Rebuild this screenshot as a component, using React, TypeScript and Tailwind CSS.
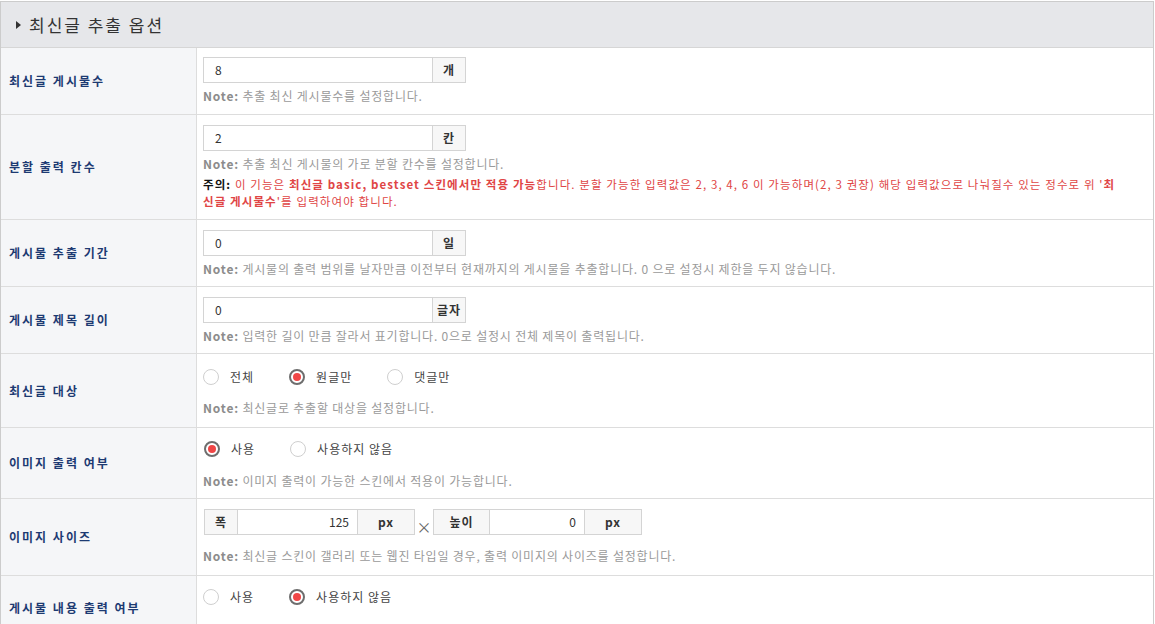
import type { ReactNode } from "react";

const font = {
  fontFamily: "'Noto Sans CJK KR', 'Noto Sans', sans-serif",
};

function Row({ label, children, className = "" }: { label: string; children: ReactNode; className?: string }) {
  return (
    <div className="flex border-b border-[#dddddd]">
      <div className="w-[196px] shrink-0 flex items-center pl-[8px] bg-[#f5f6f8] border-r border-[#dddddd] text-[12px] font-bold tracking-[2px] text-[#1d3a72]">
        {label}
      </div>
      <div className={`flex-1 pl-[6px] pr-[10px] ${className}`}>{children}</div>
    </div>
  );
}

function Note({ children, className = "mt-[4px]" }: { children: ReactNode; className?: string }) {
  return (
    <p className={`h-[18px] leading-[18px] text-[12px] tracking-[0.8px] text-[#9a9a9a] ${className}`}>
      <b className="font-bold text-[#8c8c8c]">Note:</b> {children}
    </p>
  );
}

function UnitInput({ value, unit }: { value: string; unit: string }) {
  return (
    <div className="flex h-[26px] w-[263px]">
      <div className="w-[230px] border border-[#d4d4d4] bg-white pl-[11px] text-[12px] leading-[24px] text-[#333]">
        {value}
      </div>
      <div className="w-[33px] border border-l-0 border-[#d4d4d4] bg-[#f7f7f7] text-center text-[12px] font-bold tracking-[1px] leading-[24px] text-[#333]">
        {unit}
      </div>
    </div>
  );
}

function Radio({ label, checked = false }: { label: string; checked?: boolean }) {
  return (
    <label className="flex items-center gap-[11px] mr-[35px]">
      {checked ? (
        <span className="flex h-[16px] w-[16px] items-center justify-center rounded-full border-2 border-[#6e6e6e] bg-white">
          <span className="h-[8px] w-[8px] rounded-full bg-[#f04646]" />
        </span>
      ) : (
        <span className="h-[16px] w-[16px] rounded-full border border-[#cfcfcf] bg-white" />
      )}
      <span className="text-[12px] tracking-[1px] text-[#444]">{label}</span>
    </label>
  );
}

function Box({ children, w, bold = true, right = false }: { children: ReactNode; w: string; bold?: boolean; right?: boolean }) {
  return (
    <div
      className={`${w} h-[26px] border border-[#d4d4d4] -ml-px first:ml-0 text-[12px] leading-[24px] text-[#333] ${
        bold ? "bg-[#f7f7f7] font-bold text-center tracking-[1px]" : "bg-white"
      } ${right ? "text-right pr-[8px]" : ""}`}
    >
      {children}
    </div>
  );
}

export default function App() {
  return (
    <div className="bg-white h-[624px] overflow-hidden" style={font}>
      <div className="mt-px w-[1154px] border-t border-l border-r border-[#cccccc]">
        <div className="h-[46px] flex items-center gap-[8px] pl-[15px] bg-[#e6e7ea] border-b border-[#d6d6d6]">
          <span className="h-0 w-0 border-y-[4px] border-l-[5px] border-y-transparent border-l-[#333]" />
          <h2 className="text-[17px] tracking-[2px] text-[#333]">최신글 추출 옵션</h2>
        </div>

        <Row label="최신글 게시물수" className="pt-[9px] pb-[9px]">
          <UnitInput value="8" unit="개" />
          <Note>추출 최신 게시물수를 설정합니다.</Note>
        </Row>

        <Row label="분할 출력 칸수" className="pt-[10px] pb-[9px]">
          <UnitInput value="2" unit="칸" />
          <Note>추출 최신 게시물의 가로 분할 칸수를 설정합니다.</Note>
          <p className="mt-[3px] text-[11.5px] tracking-[1.1px] leading-[17px] text-[#e04545]">
            <b className="text-[#111]">주의:</b> 이 기능은 <b>최신글 basic, bestset 스킨에서만 적용 가능</b>합니다. 분할 가능한
            입력값은 2, 3, 4, 6 이 가능하며(2, 3 권장) 해당 입력값으로 나눠질수 있는 정수로 위 '<b>최</b>
            <br />
            <b>신글 게시물수</b>'를 입력하여야 합니다.
          </p>
        </Row>

        <Row label="게시물 추출 기간" className="pt-[10px] pb-[8px]">
          <UnitInput value="0" unit="일" />
          <Note>게시물의 출력 범위를 날자만큼 이전부터 현재까지의 게시물을 추출합니다. 0 으로 설정시 제한을 두지 않습니다.</Note>
        </Row>

        <Row label="게시물 제목 길이" className="pt-[10px] pb-[8px]">
          <UnitInput value="0" unit="글자" />
          <Note>입력한 길이 만큼 잘라서 표기합니다. 0으로 설정시 전체 제목이 출력됩니다.</Note>
        </Row>

        <Row label="최신글 대상" className="pt-[10px] pb-[10px]">
          <div className="flex h-[26px] items-center">
            <Radio label="전체" />
            <Radio label="원글만" checked />
            <Radio label="댓글만" />
          </div>
          <Note className="mt-[9px]">최신글로 추출할 대상을 설정합니다.</Note>
        </Row>

        <Row label="이미지 출력 여부" className="pt-[8px] pb-[8px]">
          <div className="flex h-[26px] items-center pl-px">
            <Radio label="사용" checked />
            <Radio label="사용하지 않음" />
          </div>
          <Note className="mt-[10px]">이미지 출력이 가능한 스킨에서 적용이 가능합니다.</Note>
        </Row>

        <Row label="이미지 사이즈" className="pt-[10px] pb-[10px]">
          <div className="flex items-center pl-px">
            <div className="flex">
              <Box w="w-[34px]">폭</Box>
              <Box w="w-[121px]" bold={false} right>
                125
              </Box>
              <Box w="w-[58px]">px</Box>
            </div>
            <span className="w-[18px] pt-[8px] text-center text-[15px] leading-none text-[#666]">×</span>
            <div className="flex">
              <Box w="w-[57px]">높이</Box>
              <Box w="w-[96px]" bold={false} right>
                0
              </Box>
              <Box w="w-[58px]">px</Box>
            </div>
          </div>
          <Note className="mt-[12px]">최신글 스킨이 갤러리 또는 웹진 타입일 경우, 출력 이미지의 사이즈를 설정합니다.</Note>
        </Row>

        <Row label="게시물 내용 출력 여부" className="pt-[8px] pb-[30px]">
          <div className="flex h-[26px] items-center">
            <Radio label="사용" />
            <Radio label="사용하지 않음" checked />
          </div>
        </Row>
      </div>
    </div>
  );
}
